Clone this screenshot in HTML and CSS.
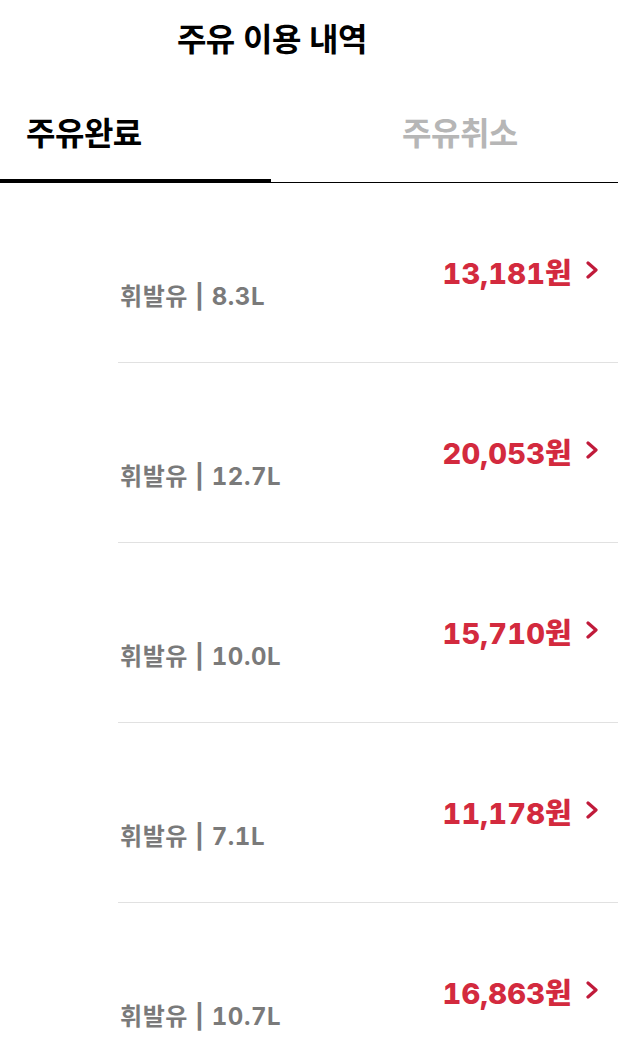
FILE: index.html
```html
<!DOCTYPE html>
<html lang="ko">

<head>
    <meta charset="UTF-8">
    <meta name="viewport" content="width=device-width, initial-scale=1.0">
    <title>주유 이용 내역</title>
    <link rel="stylesheet" href="styles.css">
</head>

<body>

    <div class="page">
        <!-- Header -->
        <div class="header">
            <h1>주유 이용 내역</h1>
        </div>

        <!-- Tabs -->
        <div class="tabs">
            <div class="tab active">주유완료</div>
            <div class="tab">주유취소</div>
        </div>

        <!-- History list -->
        <ul class="history">
            <li class="row">
                <span class="fuel">휘발유 | 8.3L</span>
                <span class="price">13,181원
                    <svg class="chev" viewBox="0 0 16 18"><polyline points="4,2 12,9 4,16" /></svg>
                </span>
            </li>
            <li class="row">
                <span class="fuel">휘발유 | 12.7L</span>
                <span class="price">20,053원
                    <svg class="chev" viewBox="0 0 16 18"><polyline points="4,2 12,9 4,16" /></svg>
                </span>
            </li>
            <li class="row">
                <span class="fuel">휘발유 | 10.0L</span>
                <span class="price">15,710원
                    <svg class="chev" viewBox="0 0 16 18"><polyline points="4,2 12,9 4,16" /></svg>
                </span>
            </li>
            <li class="row">
                <span class="fuel">휘발유 | 7.1L</span>
                <span class="price">11,178원
                    <svg class="chev" viewBox="0 0 16 18"><polyline points="4,2 12,9 4,16" /></svg>
                </span>
            </li>
            <li class="row">
                <span class="fuel">휘발유 | 10.7L</span>
                <span class="price">16,863원
                    <svg class="chev" viewBox="0 0 16 18"><polyline points="4,2 12,9 4,16" /></svg>
                </span>
            </li>
        </ul>
    </div>

</body>

</html>
```

FILE: styles.css
```css
/* General Styles */
body {
    margin: 0;
    padding: 0;
    background: #fff;
    font-family: "Noto Sans CJK KR", "Noto Sans", sans-serif;
    color: #000;
}

.page {
    width: 618px;
}

/* Header */
.header {
    height: 78px;
    display: flex;
    align-items: center;
    padding-left: 177px;
}

.header h1 {
    margin: 0 0 4px;
    font-size: 32px;
    font-weight: 700;
    letter-spacing: -0.6px;
}

/* Tabs */
.tabs {
    display: flex;
    border-bottom: 1px solid #000;
    height: 104px;
}

.tab {
    flex: 0 0 271px;
    font-size: 32px;
    font-weight: 700;
    color: #b6b6b6;
    padding-top: 30px;
    padding-left: 131px;
    box-sizing: border-box;
    letter-spacing: -0.5px;
}

.tab.active {
    color: #000;
    padding-left: 26px;
    border-bottom: 4px solid #000;
    margin-bottom: -1px;
}

/* History rows */
.history {
    list-style: none;
    margin: 0;
    padding: 0;
}

.row {
    margin-left: 118px;
    height: 180px;
    box-sizing: border-box;
    border-bottom: 1px solid #e1e1e1;
    display: flex;
    justify-content: space-between;
    align-items: flex-start;
    padding-right: 18px;
}

.fuel {
    margin-top: 97px;
    margin-left: 2px;
    font-family: Inter, "Noto Sans CJK KR", sans-serif;
    font-size: 24px;
    font-weight: 700;
    color: #7a7a7a;
    line-height: 34px;
    letter-spacing: 0.6px;
    font-variant-numeric: tabular-nums;
}

.price {
    margin-top: 73px;
    display: flex;
    align-items: center;
    font-family: Inter, "Noto Sans CJK KR", sans-serif;
    font-size: 29px;
    font-weight: 800;
    color: #d32a3e;
    line-height: 36px;
    letter-spacing: 0.2px;
    font-variant-numeric: tabular-nums;
}

.chev {
    width: 16px;
    height: 18px;
    margin-left: 12px;
    margin-top: -8px;
    fill: none;
    stroke: #c01a3a;
    stroke-width: 3.2;
    stroke-linecap: round;
    stroke-linejoin: round;
}
```
